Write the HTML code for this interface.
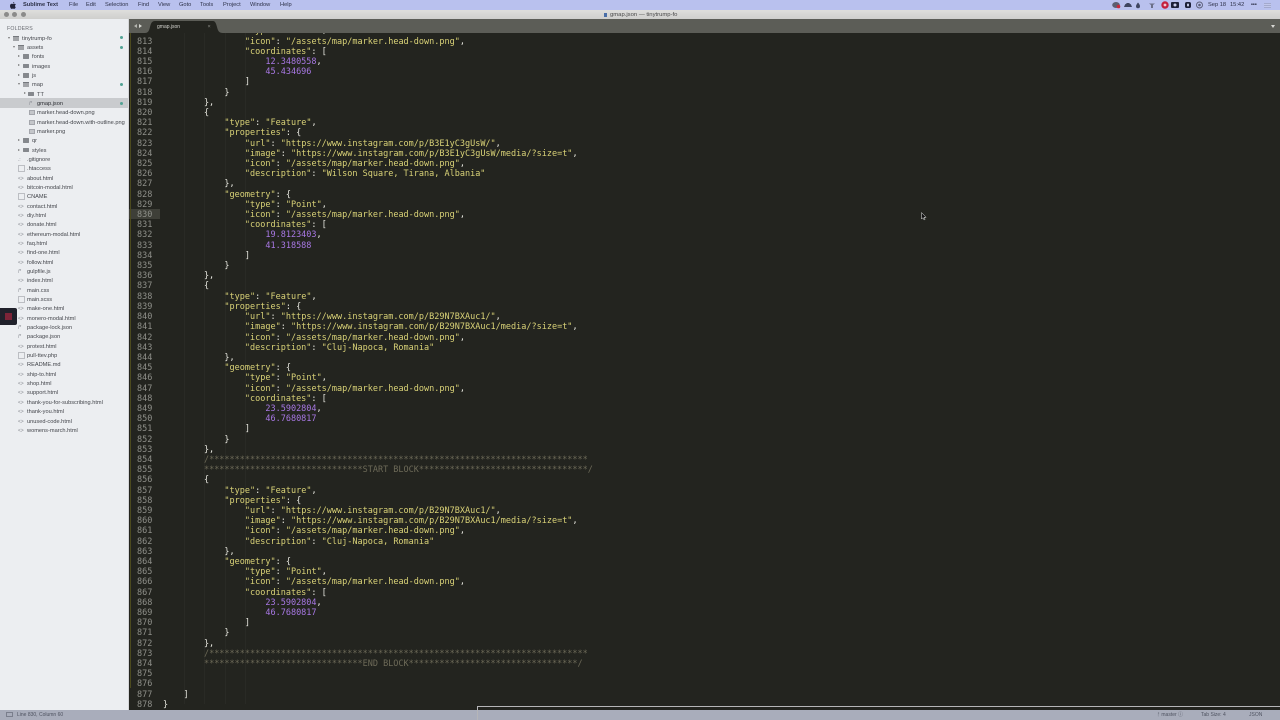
<!DOCTYPE html>
<html><head><meta charset="utf-8"><title>gmap.json — tinytrump-fo</title>
<style>
html,body{margin:0;padding:0;width:1280px;height:720px;overflow:hidden;background:#23241f}
body{position:relative;font-family:"Liberation Sans",sans-serif}
#all{position:absolute;left:0;top:0;width:1280px;height:720px;overflow:hidden;filter:blur(.35px)}
.a{position:absolute;white-space:pre}
#menu{left:0;top:0;width:1280px;height:9.5px;background:#b9c1ee;border-bottom:.5px solid #565a78}
#menu span{position:absolute;top:2.4px;font-size:5.7px;line-height:7px;color:#2d3148;white-space:pre}
#title{left:0;top:10px;width:1280px;height:9px;background:linear-gradient(#dededc,#cfcfcd)}
.dot{position:absolute;width:5px;height:5px;border-radius:50%;background:#8b8b8a;top:2px}
#tabbar{left:129px;top:19px;width:1151px;height:14px;background:#5c5d57}
#side{left:0;top:19px;width:129px;height:691px;background:#eceef1}
#sel{left:0;top:98px;width:129px;height:9.5px;background:#c9cbce}
.r{position:absolute;font-size:5.65px;line-height:8px;color:#44464c;white-space:pre;margin-top:1px}
.ic{position:absolute;font-size:5px;line-height:8px;color:#85888f;white-space:pre;letter-spacing:-.2px;margin-top:1px}
.f{position:absolute;width:6px;height:4.5px;background:#85888d;border-radius:.5px;margin-left:-3px}
.o{position:absolute;width:6px;height:4px;background:#a2a4a8;border-top:1px solid #75787d}
.d{position:absolute;width:3px;height:3px;border-radius:50%;background:#52a394;left:119.5px}
.t{position:absolute;width:0;height:0;border-left:1.5px solid transparent;border-right:1.5px solid transparent;border-top:2.2px solid #777}
.t2{position:absolute;width:0;height:0;border-top:1.5px solid transparent;border-bottom:1.5px solid transparent;border-left:2.2px solid #777}
.pg{position:absolute;width:5px;height:5px;border:1px solid #bcbec3;background:#eceef1}
.im{position:absolute;width:4px;height:3px;border:1px solid #a4a6ac;background:#c4c6ca}
#editor{left:129px;top:33px;width:1151px;height:677px;background:#23241f;overflow:hidden}
pre{margin:0;font-family:"DejaVu Sans Mono","Liberation Mono",monospace;font-size:8.5px;line-height:10.2px;position:absolute}
#gut{left:8px;top:-6.6px;color:#8f908a;width:23.5px;text-align:left}
#code{left:34px;top:-6.6px;color:#e8e8e0}
#code i{font-style:normal;color:#d9d277}
#code b{font-weight:normal;color:#a878e4}
#code u{text-decoration:none;color:#6d6a58}
#hl{left:0;top:176px;width:31px;height:10.2px;background:#3e3f38}
#mod{left:1px;top:0;width:1px;height:655px;background:#4c4a1e}
.g{position:absolute;top:0;height:671px;width:1px;background:#292a25}
#status{left:0;top:710px;width:1280px;height:10px;background:#a9adbb}
#status span{position:absolute;top:2.2px;font-size:5px;line-height:7px;color:#4f5360;white-space:pre}
#rec{left:0;top:308px;width:17px;height:16.5px;background:#20212b;border-radius:0 2px 2px 0}
#rec div{position:absolute;left:5px;top:5px;width:6.5px;height:6.5px;background:#7c2438}
#frame{left:477px;top:706px;width:810px;height:20px;border:1px solid #b5b5b8;box-sizing:border-box}
</style></head><body><div id="all">

<div class="a" id="menu">
<svg style="position:absolute;left:9.5px;top:1.5px" width="6" height="7" viewBox="0 0 12 14"><path fill="#22243a" d="M8.5 0c.1 1.6-1.2 3-2.7 3C5.700 1.500 7 .2 8.500 0zM11.500 10.200c-.7 1.700-1.800 3.600-3.100 3.600-1 0-1.400-.6-2.500-.6s-1.600.6-2.500.6C1.900 13.800 0 10.600 0 7.700 0 5 1.800 3.500 3.500 3.500c1 0 1.900.7 2.500.7s1.700-.8 2.900-.7c.5 0 2 .2 2.900 1.500-2.300 1.500-2 4.300-.3 5.200z"/></svg>
<span style="left:23px;font-weight:bold">Sublime Text</span>
<span style="left:69px">File</span><span style="left:86px">Edit</span><span style="left:105px">Selection</span><span style="left:138px">Find</span><span style="left:158px">View</span><span style="left:179px">Goto</span><span style="left:200px">Tools</span><span style="left:223px">Project</span><span style="left:250px">Window</span><span style="left:280px">Help</span>
<svg style="position:absolute;left:1112px;top:0" width="100" height="10" viewBox="0 0 100 10">
<ellipse cx="4" cy="5" rx="3.800" ry="3" fill="#5b5e70"/><circle cx="6.500" cy="6.500" r="1.800" fill="#c8283c"/>
<path fill="#3f4560" d="M12 7l1-2.500 2-1.500h2l2 1.500 1 2.500z"/>
<path fill="#3f4560" d="M26 2.500c1.500 1.700 2 2.700 2 3.700a2 2 0 0 1-4 0c0-1 .7-2 2-3.700z"/>
<path fill="#6b7088" d="M37 3.500h6l-2 1.500v3h-2V5z"/>
<circle cx="53" cy="5" r="3.700" fill="#c4203e"/><circle cx="53" cy="5" r="1.400" fill="#f0c8d0"/>
<rect x="59" y="2" width="8" height="6" rx="1" fill="#1d2038"/><circle cx="63" cy="5" r="1.500" fill="#c8cce8"/>
<rect x="73" y="2" width="6" height="6" rx="1.800" fill="#1d2038"/><rect x="75" y="3.500" width="2" height="3" rx="1" fill="#c8cce8"/>
<circle cx="87.500" cy="5" r="3" fill="none" stroke="#5b5e78" stroke-width=".9"/><circle cx="87.500" cy="5" r="1.300" fill="#5b5e78"/>
</svg>
<span style="left:1208px;font-size:5.7px">Sep 18</span><span style="left:1230px;font-size:5.7px">15:42</span>
<span style="left:1251px;font-weight:bold;font-size:5.500px">•••</span>
<div style="position:absolute;left:1264px;top:2.500px;width:7px;height:5px;background:repeating-linear-gradient(#a3a9cd 0 1px,#c2c8ea 1px 2px)"></div>
</div>

<div class="a" id="title">
<div class="dot" style="left:3.500px"></div><div class="dot" style="left:12px"></div><div class="dot" style="left:20.500px"></div>
<div style="position:absolute;left:603.500px;top:2.500px;width:3px;height:4px;background:#4a6fa8"></div>
<span style="position:absolute;left:610px;top:2px;font-size:5.9px;line-height:7px;color:#4a4a4a">gmap.json — tinytrump-fo</span>
</div>

<div class="a" id="tabbar">
<div style="position:absolute;left:5px;top:5px;width:0;height:0;border-top:2px solid transparent;border-bottom:2px solid transparent;border-right:3px solid #b5b6b0"></div>
<div style="position:absolute;left:10px;top:5px;width:0;height:0;border-top:2px solid transparent;border-bottom:2px solid transparent;border-left:3px solid #d5d6d0"></div>
<svg style="position:absolute;left:16px;top:0" width="78" height="14"><path d="M0 14c3 0 4-2 5-6 1-4 2-6 5-6h58c2 0 3 2 4 6 1 4 2 6 6 6z" fill="#23241f"/></svg>
<span style="position:absolute;left:28px;top:5px;font-size:5px;line-height:7px;color:#d4d4cf">gmap.json</span>
<span style="position:absolute;left:78.500px;top:5px;font-size:5.500px;line-height:7px;color:#8f908a">×</span>
<div style="position:absolute;left:1142px;top:5.500px;width:0;height:0;border-left:2px solid transparent;border-right:2px solid transparent;border-top:3px solid #d8d8d4"></div>
</div>

<div class="a" id="editor">
<div class="a" id="hl"></div><div class="a" id="mod"></div>
<div class="g" style="left:55px"></div><div class="g" style="left:75px"></div><div class="g" style="left:96px"></div><div class="g" style="left:116px"></div>
<pre id="gut">812
813
814
815
816
817
818
819
820
821
822
823
824
825
826
827
828
829
830
831
832
833
834
835
836
837
838
839
840
841
842
843
844
845
846
847
848
849
850
851
852
853
854
855
856
857
858
859
860
861
862
863
864
865
866
867
868
869
870
871
872
873
874
875
876
877
878</pre>
<pre id="code">                <i>"type"</i>: <i>"Point"</i>,
                <i>"icon"</i>: <i>"/assets/map/marker.head-down.png"</i>,
                <i>"coordinates"</i>: [
                    <b>12.3480558</b>,
                    <b>45.434696</b>
                ]
            }
        },
        {
            <i>"type"</i>: <i>"Feature"</i>,
            <i>"properties"</i>: {
                <i>"url"</i>: <i>"https://www.instagram.com/p/B3E1yC3gUsW/"</i>,
                <i>"image"</i>: <i>"https://www.instagram.com/p/B3E1yC3gUsW/media/?size=t"</i>,
                <i>"icon"</i>: <i>"/assets/map/marker.head-down.png"</i>,
                <i>"description"</i>: <i>"Wilson Square, Tirana, Albania"</i>
            },
            <i>"geometry"</i>: {
                <i>"type"</i>: <i>"Point"</i>,
                <i>"icon"</i>: <i>"/assets/map/marker.head-down.png"</i>,
                <i>"coordinates"</i>: [
                    <b>19.8123403</b>,
                    <b>41.318588</b>
                ]
            }
        },
        {
            <i>"type"</i>: <i>"Feature"</i>,
            <i>"properties"</i>: {
                <i>"url"</i>: <i>"https://www.instagram.com/p/B29N7BXAuc1/"</i>,
                <i>"image"</i>: <i>"https://www.instagram.com/p/B29N7BXAuc1/media/?size=t"</i>,
                <i>"icon"</i>: <i>"/assets/map/marker.head-down.png"</i>,
                <i>"description"</i>: <i>"Cluj-Napoca, Romania"</i>
            },
            <i>"geometry"</i>: {
                <i>"type"</i>: <i>"Point"</i>,
                <i>"icon"</i>: <i>"/assets/map/marker.head-down.png"</i>,
                <i>"coordinates"</i>: [
                    <b>23.5902804</b>,
                    <b>46.7680817</b>
                ]
            }
        },
        <u>/**************************************************************************</u>
        <u>*******************************START BLOCK*********************************/</u>
        {
            <i>"type"</i>: <i>"Feature"</i>,
            <i>"properties"</i>: {
                <i>"url"</i>: <i>"https://www.instagram.com/p/B29N7BXAuc1/"</i>,
                <i>"image"</i>: <i>"https://www.instagram.com/p/B29N7BXAuc1/media/?size=t"</i>,
                <i>"icon"</i>: <i>"/assets/map/marker.head-down.png"</i>,
                <i>"description"</i>: <i>"Cluj-Napoca, Romania"</i>
            },
            <i>"geometry"</i>: {
                <i>"type"</i>: <i>"Point"</i>,
                <i>"icon"</i>: <i>"/assets/map/marker.head-down.png"</i>,
                <i>"coordinates"</i>: [
                    <b>23.5902804</b>,
                    <b>46.7680817</b>
                ]
            }
        },
        <u>/**************************************************************************</u>
        <u>*******************************END BLOCK*********************************/</u>


    ]
}</pre>
</div>

<div class="a" id="side"></div>
<div class="a" id="sel"></div>
<div class="a" style="left:128px;top:19px;width:1px;height:691px;background:#d5d6d9"></div>

<div class="r" style="left:7px;top:24px;color:#6a6c72;letter-spacing:.2px;font-size:5.2px">FOLDERS</div>

<div class="t" style="left:7.500px;top:36.500px"></div><div class="o" style="left:12.500px;top:35.500px"></div><div class="r" style="left:22px;top:33.500px">tinytrump-fo</div><div class="d" style="top:36px"></div>
<div class="t" style="left:12.500px;top:46px"></div><div class="o" style="left:18px;top:45px"></div><div class="r" style="left:27px;top:43px">assets</div><div class="d" style="top:45.500px"></div>
<div class="t2" style="left:18px;top:54.500px"></div><div class="f" style="left:26px;top:54px"></div><div class="r" style="left:32px;top:52px">fonts</div>
<div class="t2" style="left:18px;top:64px"></div><div class="f" style="left:26px;top:63.500px"></div><div class="r" style="left:32px;top:61.500px">images</div>
<div class="t2" style="left:18px;top:73.500px"></div><div class="f" style="left:26px;top:73px"></div><div class="r" style="left:32px;top:71px">js</div>
<div class="t" style="left:18px;top:83px"></div><div class="o" style="left:23px;top:82px"></div><div class="r" style="left:32px;top:80px">map</div><div class="d" style="top:82.500px"></div>
<div class="t2" style="left:23.500px;top:92px"></div><div class="f" style="left:31px;top:91.500px"></div><div class="r" style="left:37px;top:89.500px">TT</div>
<div class="ic" style="left:29px;top:99px">/*</div><div class="r" style="left:37px;top:99px;color:#2c2e33">gmap.json</div><div class="d" style="top:101.500px"></div>
<div class="im" style="left:29px;top:110px"></div><div class="r" style="left:37px;top:108px">marker.head-down.png</div>
<div class="im" style="left:29px;top:119.500px"></div><div class="r" style="left:37px;top:117.500px">marker.head-down.with-outline.png</div>
<div class="im" style="left:29px;top:129px"></div><div class="r" style="left:37px;top:127px">marker.png</div>
<div class="t2" style="left:18px;top:139px"></div><div class="f" style="left:26px;top:138px"></div><div class="r" style="left:32px;top:136px">qr</div>
<div class="t2" style="left:18px;top:148.500px"></div><div class="f" style="left:26px;top:147.500px"></div><div class="r" style="left:32px;top:145.500px">styles</div>

<div class="ic" style="left:18px;top:155px">.:</div><div class="r" style="left:27px;top:155px">.gitignore</div>
<div class="pg" style="left:18px;top:165px"></div><div class="r" style="left:27px;top:164px">.htaccess</div>
<div class="ic" style="left:18px;top:174px">&lt;&gt;</div><div class="r" style="left:27px;top:174px">about.html</div>
<div class="ic" style="left:18px;top:183px">&lt;&gt;</div><div class="r" style="left:27px;top:183px">bitcoin-modal.html</div>
<div class="pg" style="left:18px;top:193px"></div><div class="r" style="left:27px;top:192px">CNAME</div>
<div class="ic" style="left:18px;top:201.500px">&lt;&gt;</div><div class="r" style="left:27px;top:201.500px">contact.html</div>
<div class="ic" style="left:18px;top:211px">&lt;&gt;</div><div class="r" style="left:27px;top:211px">diy.html</div>
<div class="ic" style="left:18px;top:220px">&lt;&gt;</div><div class="r" style="left:27px;top:220px">donate.html</div>
<div class="ic" style="left:18px;top:229.500px">&lt;&gt;</div><div class="r" style="left:27px;top:229.500px">ethereum-modal.html</div>
<div class="ic" style="left:18px;top:239px">&lt;&gt;</div><div class="r" style="left:27px;top:239px">faq.html</div>
<div class="ic" style="left:18px;top:248px">&lt;&gt;</div><div class="r" style="left:27px;top:248px">find-one.html</div>
<div class="ic" style="left:18px;top:257.500px">&lt;&gt;</div><div class="r" style="left:27px;top:257.500px">follow.html</div>
<div class="ic" style="left:18px;top:267px">/*</div><div class="r" style="left:27px;top:267px">gulpfile.js</div>
<div class="ic" style="left:18px;top:276px">&lt;&gt;</div><div class="r" style="left:27px;top:276px">index.html</div>
<div class="ic" style="left:18px;top:285.500px">/*</div><div class="r" style="left:27px;top:285.500px">main.css</div>
<div class="pg" style="left:18px;top:296px"></div><div class="r" style="left:27px;top:295px">main.scss</div>
<div class="ic" style="left:18px;top:304px">&lt;&gt;</div><div class="r" style="left:27px;top:304px">make-one.html</div>
<div class="ic" style="left:18px;top:313.500px">&lt;&gt;</div><div class="r" style="left:27px;top:313.500px">monero-modal.html</div>
<div class="ic" style="left:18px;top:323px">/*</div><div class="r" style="left:27px;top:323px">package-lock.json</div>
<div class="ic" style="left:18px;top:332px">/*</div><div class="r" style="left:27px;top:332px">package.json</div>
<div class="ic" style="left:18px;top:341.500px">&lt;&gt;</div><div class="r" style="left:27px;top:341.500px">protest.html</div>
<div class="pg" style="left:18px;top:352px"></div><div class="r" style="left:27px;top:351px">pull-ttev.php</div>
<div class="ic" style="left:18px;top:360px">&lt;&gt;</div><div class="r" style="left:27px;top:360px">README.md</div>
<div class="ic" style="left:18px;top:369.500px">&lt;&gt;</div><div class="r" style="left:27px;top:369.500px">ship-to.html</div>
<div class="ic" style="left:18px;top:379px">&lt;&gt;</div><div class="r" style="left:27px;top:379px">shop.html</div>
<div class="ic" style="left:18px;top:388px">&lt;&gt;</div><div class="r" style="left:27px;top:388px">support.html</div>
<div class="ic" style="left:18px;top:397.500px">&lt;&gt;</div><div class="r" style="left:27px;top:397.500px">thank-you-for-subscribing.html</div>
<div class="ic" style="left:18px;top:407px">&lt;&gt;</div><div class="r" style="left:27px;top:407px">thank-you.html</div>
<div class="ic" style="left:18px;top:416.500px">&lt;&gt;</div><div class="r" style="left:27px;top:416.500px">unused-code.html</div>
<div class="ic" style="left:18px;top:426px">&lt;&gt;</div><div class="r" style="left:27px;top:426px">womens-march.html</div>

<div class="a" id="rec"><div></div></div>

<div class="a" id="status">
<div style="position:absolute;left:6px;top:2px;width:5px;height:3px;border:1px solid #7a7e8c"></div>
<span style="left:17px">Line 830, Column 60</span>
<span style="left:1157px">ᚠ master ⓘ</span>
<span style="left:1201px">Tab Size: 4</span>
<span style="left:1249px">JSON</span>
</div>
<div class="a" id="frame"></div>

<svg class="a" style="left:921px;top:212px" width="6" height="9" viewBox="0 0 6 9"><path d="M.5.500v6.500l1.600-1.300 1 2.200 1-.5-1-2.100h2z" fill="#111" stroke="#eee" stroke-width=".5"/></svg>

</div></body></html>
